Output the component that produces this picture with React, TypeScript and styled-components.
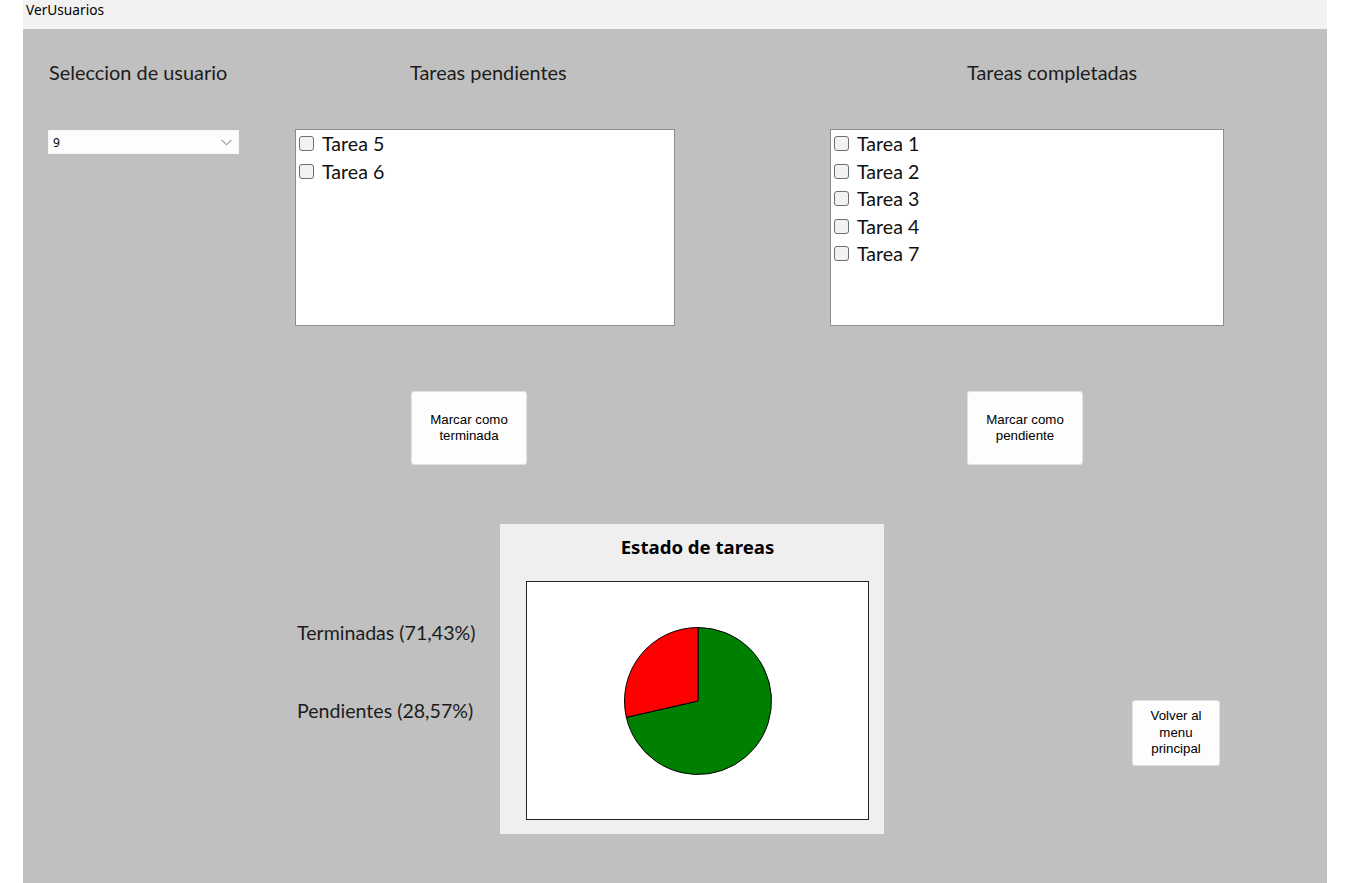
import React from "react";
import styled, { createGlobalStyle } from "styled-components";

const GlobalStyle = createGlobalStyle`
  html, body { margin: 0; padding: 0; background: #ffffff; }
  * { box-sizing: border-box; }
`;

const Window = styled.div`
  margin-left: 23px;
  width: 1304px;
  display: flex;
  flex-direction: column;
`;

const TitleBar = styled.div`
  height: 29px;
  background: #f2f2f2;
  font-family: "Noto Sans", sans-serif;
  font-size: 13.7px;
  line-height: 20px;
  padding-left: 3px;
  color: #000;
`;

const Client = styled.div`
  height: 854px;
  background: #c0c0c0;
  padding-left: 25px;
  display: flex;
  flex-direction: column;
`;

const TopRow = styled.div`
  display: flex;
  align-items: flex-start;
`;

const Column = styled.div<{ $width: number; $offset: number }>`
  width: ${(p) => p.$width}px;
  margin-left: ${(p) => p.$offset}px;
  display: flex;
  flex-direction: column;
`;

const Heading = styled.div<{ $indent: number }>`
  font-family: Lato, "Liberation Sans", sans-serif;
  font-size: 19.9px;
  line-height: 22px;
  height: 22px;
  margin: 32px 0 46px;
  padding-left: ${(p) => p.$indent}px;
  color: #1c1c1c;
  white-space: nowrap;
`;

const Combo = styled.div`
  margin-top: 1px;
  height: 24px;
  background: #fdfdfd;
  border: 1px solid #f6f6f6;
  display: flex;
  align-items: center;
  justify-content: space-between;
  padding: 0 6px 0 4px;
  font-family: "Noto Sans", sans-serif;
  font-size: 12px;
  color: #000;
`;

const ListBox = styled.div`
  height: 197px;
  background: #ffffff;
  border: 1px solid #8a8d92;
  padding: 0 0 0 2px;
  display: flex;
  flex-direction: column;
`;

const Item = styled.label`
  height: 27.5px;
  display: flex;
  align-items: center;
  gap: 8px;
  font-family: Lato, "Liberation Sans", sans-serif;
  font-size: 19.6px;
  color: #111;
`;

const Check = styled.span`
  width: 15px;
  height: 15px;
  border: 1px solid #6e6e6e;
  border-radius: 3px;
  background: #f2f2f2;
  flex: none;
  margin-left: 1px;
`;

const ActionButton = styled.button<{ $indent?: number; $w: number; $h: number }>`
  width: ${(p) => p.$w}px;
  height: ${(p) => p.$h}px;
  margin-left: ${(p) => p.$indent ?? 0}px;
  background: #fdfdfd;
  border: 1px solid #e2e2e2;
  border-radius: 3px;
  font-family: "Liberation Sans", Arial, sans-serif;
  font-size: 13.3px;
  line-height: 16.5px;
  color: #000;
  padding: 0 4px;
  text-align: center;
`;

const ButtonSlot = styled.div`
  margin-top: 65px;
  display: flex;
`;

const BottomRow = styled.div`
  margin-top: 59px;
  display: flex;
  align-items: flex-start;
`;

const Legend = styled.div`
  width: 203px;
  margin-left: 249px;
  display: flex;
  flex-direction: column;
  padding-top: 98px;
  gap: 56px;
`;

const LegendText = styled.div`
  font-family: Lato, "Liberation Sans", sans-serif;
  font-size: 19.6px;
  line-height: 22px;
  color: #1c1c1c;
  white-space: nowrap;
`;

const ChartPanel = styled.div`
  width: 384px;
  height: 310px;
  background: #efefef;
  padding: 12px 0 0 26px;
  display: flex;
  flex-direction: column;
`;

const ChartTitle = styled.div`
  width: 343px;
  text-align: center;
  font-family: "Noto Sans", sans-serif;
  font-weight: 700;
  font-size: 18.6px;
  line-height: 22px;
  color: #000;
`;

const ChartArea = styled.div`
  margin-top: 23px;
  width: 343px;
  height: 239px;
  background: #fff;
  border: 1px solid #222;
  display: flex;
  align-items: center;
  justify-content: center;
`;

const BackSlot = styled.div`
  margin-left: 248px;
  margin-top: 176px;
  display: flex;
`;

const pending = ["Tarea 5", "Tarea 6"];
const done = ["Tarea 1", "Tarea 2", "Tarea 3", "Tarea 4", "Tarea 7"];

function Pie({ ratio }: { ratio: number }) {
  const r = 73.5;
  const cx = 75;
  const cy = 75;
  const ang = ratio * 2 * Math.PI;
  const ex = cx - r * Math.sin(ang);
  const ey = cy - r * Math.cos(ang);
  const large = ratio > 0.5 ? 1 : 0;
  return (
    <svg width="150" height="150" viewBox="0 0 150 150">
      <path
        d={`M${cx},${cy} L${cx},${cy - r} A${r},${r} 0 ${1 - large} 1 ${ex},${ey} Z`}
        fill="#008000"
        stroke="#000"
        strokeWidth="1"
      />
      <path
        d={`M${cx},${cy} L${cx},${cy - r} A${r},${r} 0 ${large} 0 ${ex},${ey} Z`}
        fill="#ff0000"
        stroke="#000"
        strokeWidth="1"
      />
    </svg>
  );
}

export default function App() {
  return (
    <>
      <GlobalStyle />
      <Window>
        <TitleBar>VerUsuarios</TitleBar>
        <Client>
          <TopRow>
            <Column $width={191} $offset={0}>
              <Heading $indent={1}>Seleccion de usuario</Heading>
              <Combo>
                <span>9</span>
                <svg width="11" height="7" viewBox="0 0 11 7">
                  <polyline points="0.5,0.8 5.5,5.8 10.5,0.8" fill="none" stroke="#707070" strokeWidth="1" />
                </svg>
              </Combo>
            </Column>
            <Column $width={380} $offset={56}>
              <Heading $indent={115}>Tareas pendientes</Heading>
              <ListBox>
                {pending.map((t) => (
                  <Item key={t}>
                    <Check />
                    {t}
                  </Item>
                ))}
              </ListBox>
              <ButtonSlot>
                <ActionButton $indent={116} $w={116} $h={74}>
                  Marcar como terminada
                </ActionButton>
              </ButtonSlot>
            </Column>
            <Column $width={394} $offset={155}>
              <Heading $indent={137}>Tareas completadas</Heading>
              <ListBox>
                {done.map((t) => (
                  <Item key={t}>
                    <Check />
                    {t}
                  </Item>
                ))}
              </ListBox>
              <ButtonSlot>
                <ActionButton $indent={137} $w={116} $h={74}>
                  Marcar como pendiente
                </ActionButton>
              </ButtonSlot>
            </Column>
          </TopRow>
          <BottomRow>
            <Legend>
              <LegendText>Terminadas (71,43%)</LegendText>
              <LegendText>Pendientes (28,57%)</LegendText>
            </Legend>
            <ChartPanel>
              <ChartTitle>Estado de tareas</ChartTitle>
              <ChartArea>
                <Pie ratio={2 / 7} />
              </ChartArea>
            </ChartPanel>
            <BackSlot>
              <ActionButton $w={88} $h={66}>
                Volver al menu principal
              </ActionButton>
            </BackSlot>
          </BottomRow>
        </Client>
      </Window>
    </>
  );
}
